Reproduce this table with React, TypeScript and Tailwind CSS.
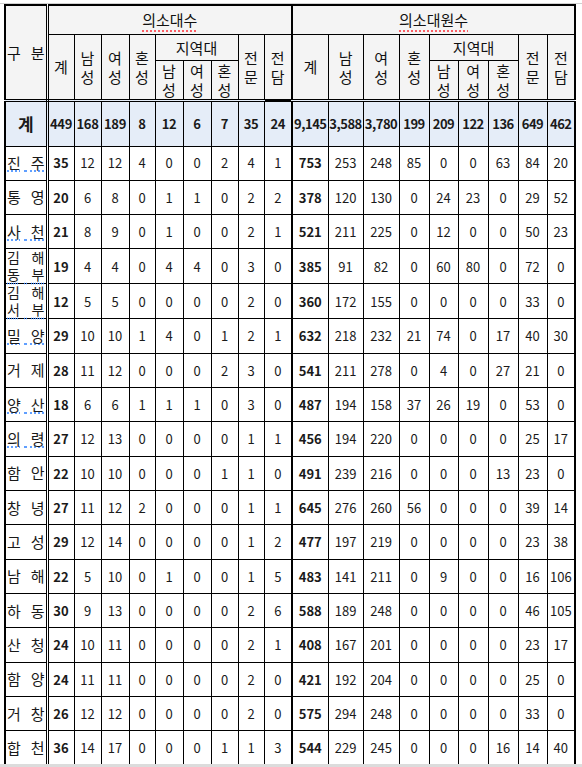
import React from "react";

const rows: { name: string[]; ul?: number; a: number[]; b: number[] }[] = [
  { name: ["진 주"], ul: 0, a: [35, 12, 12, 4, 0, 0, 2, 4, 1], b: [753, 253, 248, 85, 0, 0, 63, 84, 20] },
  { name: ["통 영"], a: [20, 6, 8, 0, 1, 1, 0, 2, 2], b: [378, 120, 130, 0, 24, 23, 0, 29, 52] },
  { name: ["사 천"], ul: 0, a: [21, 8, 9, 0, 1, 0, 0, 2, 1], b: [521, 211, 225, 0, 12, 0, 0, 50, 23] },
  { name: ["김 해", "동 부"], ul: 1, a: [19, 4, 4, 0, 4, 4, 0, 3, 0], b: [385, 91, 82, 0, 60, 80, 0, 72, 0] },
  { name: ["김 해", "서 부"], ul: 1, a: [12, 5, 5, 0, 0, 0, 0, 2, 0], b: [360, 172, 155, 0, 0, 0, 0, 33, 0] },
  { name: ["밀 양"], ul: 0, a: [29, 10, 10, 1, 4, 0, 1, 2, 1], b: [632, 218, 232, 21, 74, 0, 17, 40, 30] },
  { name: ["거 제"], a: [28, 11, 12, 0, 0, 0, 2, 3, 0], b: [541, 211, 278, 0, 4, 0, 27, 21, 0] },
  { name: ["양 산"], ul: 0, a: [18, 6, 6, 1, 1, 1, 0, 3, 0], b: [487, 194, 158, 37, 26, 19, 0, 53, 0] },
  { name: ["의 령"], ul: 0, a: [27, 12, 13, 0, 0, 0, 0, 1, 1], b: [456, 194, 220, 0, 0, 0, 0, 25, 17] },
  { name: ["함 안"], a: [22, 10, 10, 0, 0, 0, 1, 1, 0], b: [491, 239, 216, 0, 0, 0, 13, 23, 0] },
  { name: ["창 녕"], a: [27, 11, 12, 2, 0, 0, 0, 1, 1], b: [645, 276, 260, 56, 0, 0, 0, 39, 14] },
  { name: ["고 성"], a: [29, 12, 14, 0, 0, 0, 0, 1, 2], b: [477, 197, 219, 0, 0, 0, 0, 23, 38] },
  { name: ["남 해"], a: [22, 5, 10, 0, 1, 0, 0, 1, 5], b: [483, 141, 211, 0, 9, 0, 0, 16, 106] },
  { name: ["하 동"], a: [30, 9, 13, 0, 0, 0, 0, 2, 6], b: [588, 189, 248, 0, 0, 0, 0, 46, 105] },
  { name: ["산 청"], a: [24, 10, 11, 0, 0, 0, 0, 2, 1], b: [408, 167, 201, 0, 0, 0, 0, 23, 17] },
  { name: ["함 양"], a: [24, 11, 11, 0, 0, 0, 0, 2, 0], b: [421, 192, 204, 0, 0, 0, 0, 25, 0] },
  { name: ["거 창"], a: [26, 12, 12, 0, 0, 0, 0, 2, 0], b: [575, 294, 248, 0, 0, 0, 0, 33, 0] },
  { name: ["합 천"], a: [36, 14, 17, 0, 0, 0, 1, 1, 3], b: [544, 229, 245, 0, 0, 0, 16, 14, 40] },
];

const totalsA = ["449", "168", "189", "8", "12", "6", "7", "35", "24"];
const totalsB = ["9,145", "3,588", "3,780", "199", "209", "122", "136", "649", "462"];

const widths = [42, 27, 27, 28, 26, 28, 28, 27, 26, 28, 36, 35, 36, 30, 29, 30, 30, 29, 28];

const hd = "border border-black bg-[#f4f4f4] text-center align-middle text-[15px] leading-[19px] font-normal p-0 text-[#111]";
const ulc = "underline decoration-dotted decoration-blue-500 underline-offset-2";

function Stack({ a, b }: { a: string; b: string }) {
  return (
    <>
      {a}
      <br />
      {b}
    </>
  );
}

function Spread({ text, ul, cls }: { text: string; ul?: boolean; cls?: string }) {
  const [x, y] = text.split(" ");
  const u = ul ? ulc : "";
  return (
    <div className={"flex justify-between px-[1px] " + (cls || "")}>
      <span className={u}>{x}</span>
      <span className={"flex-1 " + u}>&nbsp;</span>
      <span className={u}>{y}</span>
    </div>
  );
}

function HeaderGroup({ first }: { first: boolean }) {
  return (
    <>
      <th rowSpan={2} className={hd}>계</th>
      <th rowSpan={2} className={hd}><Stack a="남" b="성" /></th>
      <th rowSpan={2} className={hd}><Stack a="여" b="성" /></th>
      <th rowSpan={2} className={hd}><Stack a="혼" b="성" /></th>
      <th colSpan={3} className={hd}>지역대</th>
      <th rowSpan={2} className={hd}><Stack a="전" b="문" /></th>
      <th rowSpan={2} className={hd + (first ? " border-r-2" : "")}><Stack a="전" b="담" /></th>
    </>
  );
}

export default function App() {
  return (
    <div className="w-[582px] h-[767px] bg-white overflow-hidden relative" style={{ fontFamily: '"Noto Sans CJK KR", "Noto Sans", sans-serif' }}>
      <div className="h-[4px] border-b border-[#d0d0d0] bg-white" />
      <table className="ml-[4px] border-collapse table-fixed w-[570px] border-2 border-black text-[#1a1a1a]">
        <colgroup>
          {widths.map((w, i) => (
            <col key={i} style={{ width: w }} />
          ))}
        </colgroup>
        <thead>
          <tr className="h-[29px]">
            <th rowSpan={3} className={hd + " border-r-[3px] border-r-black border-double border-b-[3px] text-[15px] whitespace-nowrap"}>
              <Spread text="구 분" />
            </th>
            <th colSpan={9} className={hd + " border-r-2"}>
              <span className="underline decoration-dotted decoration-red-500 underline-offset-4">의소대수</span>
            </th>
            <th colSpan={9} className={hd}>
              <span className="underline decoration-dotted decoration-red-500 underline-offset-4">의소대원수</span>
            </th>
          </tr>
          <tr className="h-[26px]">
            <HeaderGroup first={true} />
            <HeaderGroup first={false} />
          </tr>
          <tr className="h-[39px]">
            {[0, 1].map((g) =>
              [["남", "성"], ["여", "성"], ["혼", "성"]].map(([x, y], i) => (
                <th key={g + "-" + i} className={hd}>
                  <Stack a={x} b={y} />
                </th>
              ))
            ).flat()}
          </tr>
        </thead>
        <tbody>
          <tr className="h-[46px] bg-[#e5edf8]">
            <td className="border border-black border-t-[3px] border-t-black border-double border-r-[3px] text-center text-[17px] font-bold p-0">계</td>
            {totalsA.map((v, i) => (
              <td key={"a" + i} className={"border border-black border-t-[3px] border-double text-center text-[13px] font-bold p-0 tracking-tight" + (i === 8 ? " border-r-2 border-r-black border-solid" : "")}>
                {v}
              </td>
            ))}
            {totalsB.map((v, i) => (
              <td key={"b" + i} className="border border-black border-t-[3px] border-double text-center text-[13px] font-bold p-0 tracking-[-0.5px]">
                {v}
              </td>
            ))}
          </tr>
          {rows.map((r, ri) => (
            <tr key={ri} className="h-[34.33px]">
              <td className="border border-black border-r-[3px] border-double text-center p-0 whitespace-nowrap">
                {r.name.map((n, ni) => (
                  <Spread
                    key={ni}
                    text={n}
                    ul={r.ul === ni}
                    cls={r.name.length > 1 ? "text-[14px] leading-[17px]" : "text-[15px] leading-[20px]"}
                  />
                ))}
              </td>
              {r.a.map((v, i) => (
                <td key={"a" + i} className={"border border-black text-center text-[13px] p-0" + (i === 0 ? " font-bold" : "") + (i === 8 ? " border-r-2" : "")}>
                  {v}
                </td>
              ))}
              {r.b.map((v, i) => (
                <td key={"b" + i} className={"border border-black text-center text-[13px] p-0" + (i === 0 ? " font-bold" : "")}>
                  {v}
                </td>
              ))}
            </tr>
          ))}
        </tbody>
      </table>
      <div className="absolute left-0 right-0 bottom-0 h-[3px] bg-[#dcdcdc]" />
    </div>
  );
}
